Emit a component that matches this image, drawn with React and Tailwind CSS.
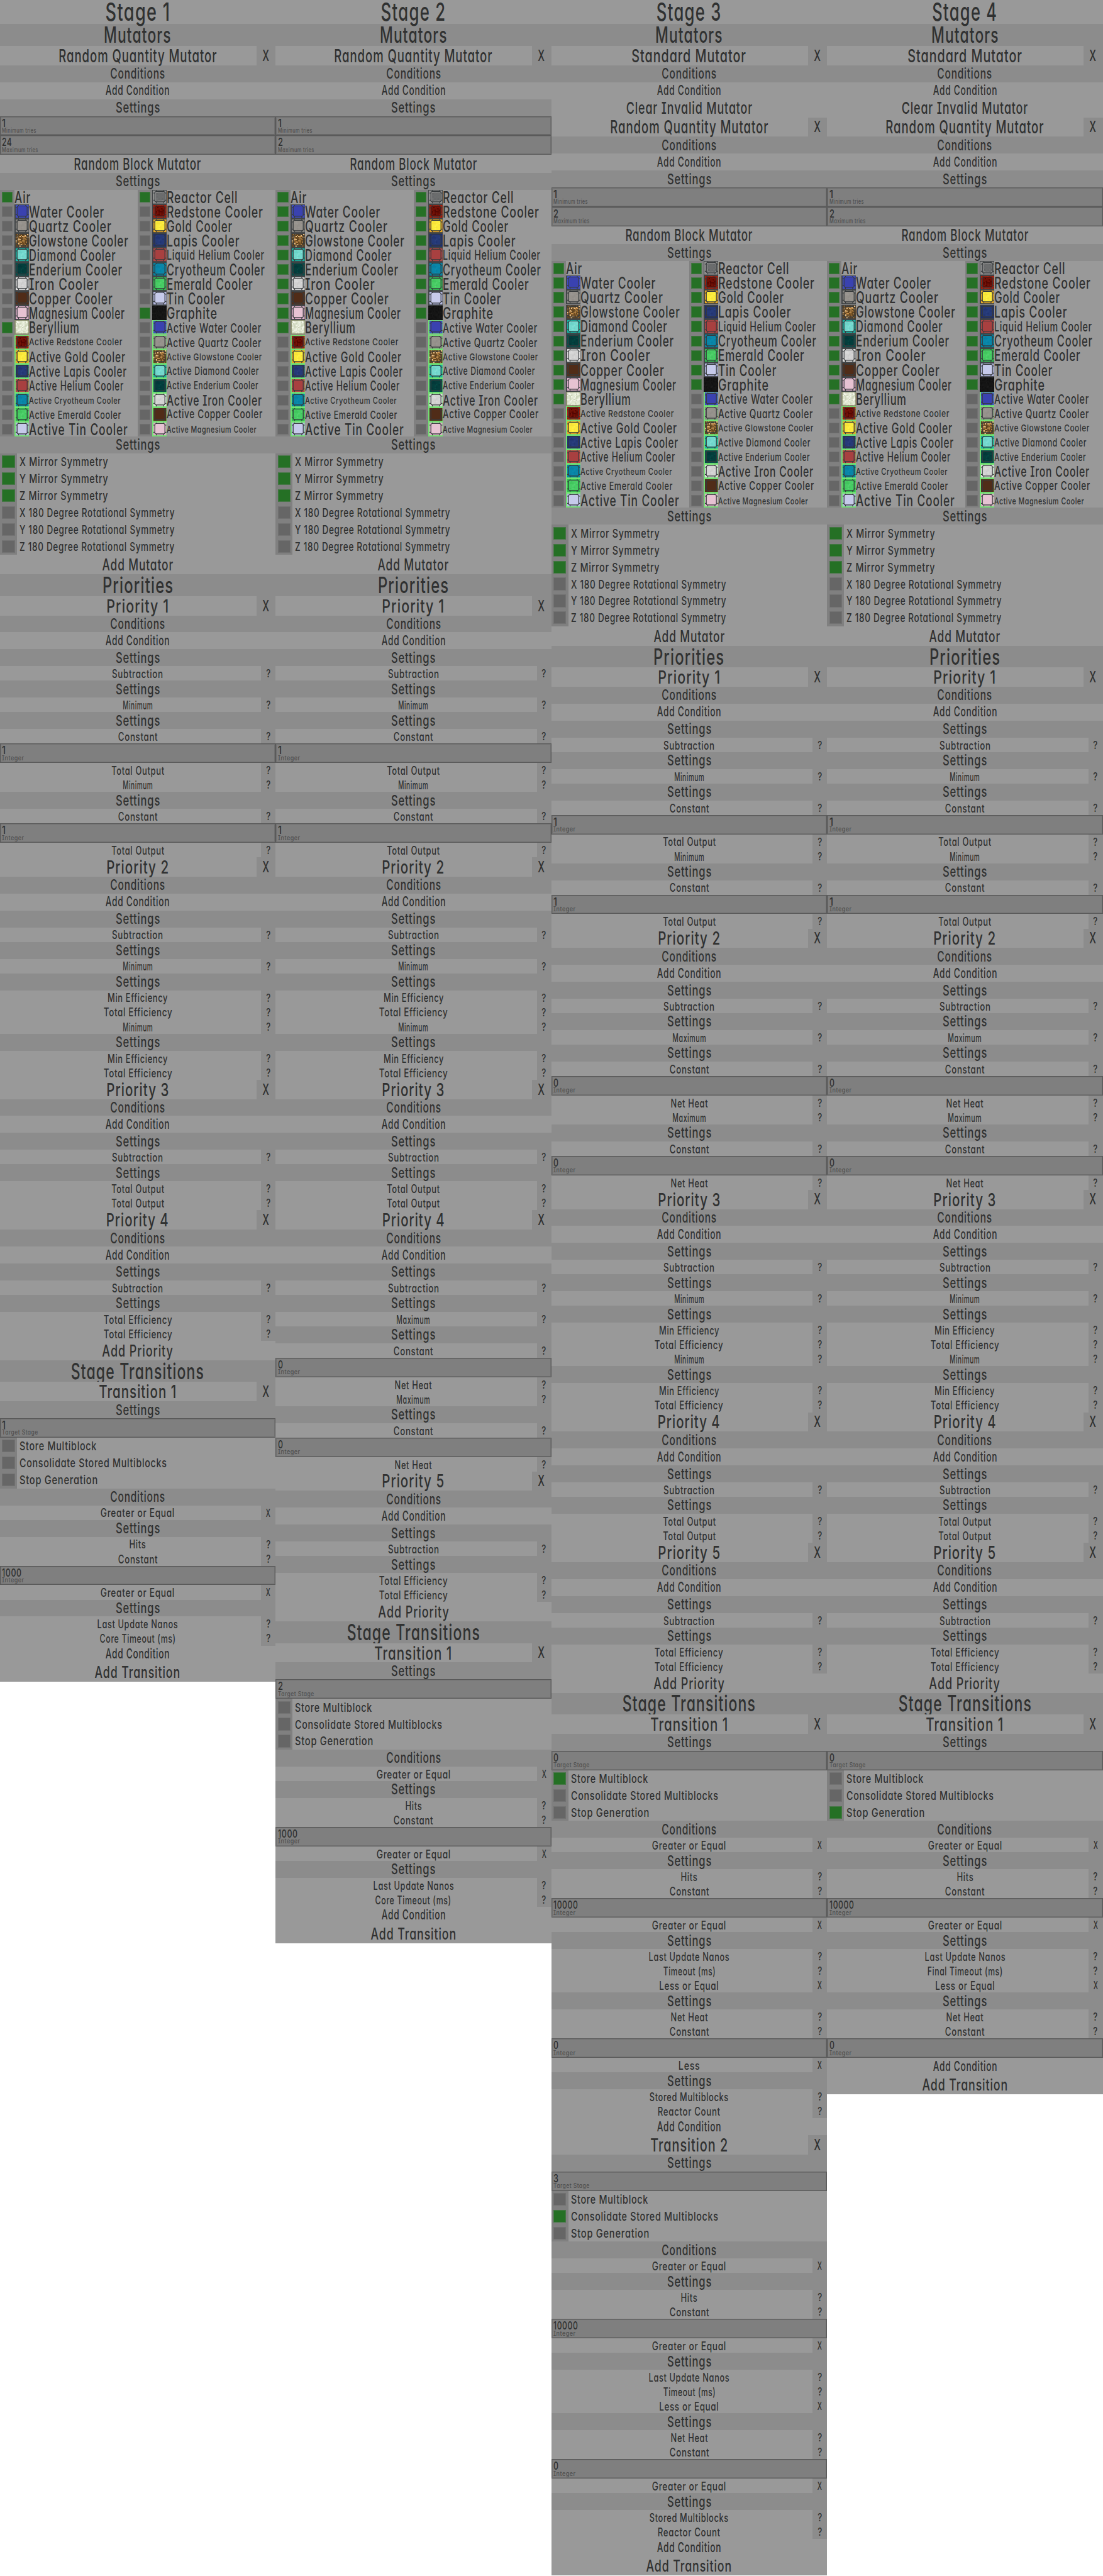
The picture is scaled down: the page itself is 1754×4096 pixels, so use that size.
import React, { useLayoutEffect, useRef, useState } from "react";

const PAGE_WIDTH = 1824;

/* Text squeezed or stretched horizontally to a given width. */
function Label({ children, width, className = "", origin = "origin-center" }) {
  const ref = useRef(null);
  const [scale, setScale] = useState(1);
  useLayoutEffect(() => {
    const zoom = document.getElementById("page").getBoundingClientRect().width / PAGE_WIDTH;
    const node = ref.current;
    const previous = node.style.transform;
    node.style.transform = "none";
    const natural = node.getBoundingClientRect().width / zoom;
    node.style.transform = previous;
    setScale((width + 2) / natural);
  }, [width, children]);
  return (
    <span
      ref={ref}
      className={`inline-block shrink-0 leading-[1.22] tracking-[0.05em] whitespace-nowrap ${origin} ${className}`}
      style={{ transform: `scaleX(${scale})` }}
    >
      {children}
    </span>
  );
}

const WIDTHS = {
  Mutators: 110, "Random Quantity Mutator": 260, "Standard Mutator": 188, "Clear Invalid Mutator": 207.5,
  "Random Block Mutator": 209, Conditions: 89, "Add Condition": 104.5, Settings: 72, "Add Mutator": 116,
  Priorities: 116, Subtraction: 83, Minimum: 48, Maximum: 54, Constant: 64, "Total Output": 86,
  "Min Efficiency": 98, "Total Efficiency": 112, "Add Priority": 116, "Stage Transitions": 219,
  "Greater or Equal": 121, "Less or Equal": 97, Less: 34, Hits: 26, "Net Heat": 60,
  "Last Update Nanos": 132, "Core Timeout (ms)": 124, "Final Timeout (ms)": 123, "Timeout (ms)": 85,
  "Stored Multiblocks": 129, "Reactor Count": 102, "Add Transition": 140,
  "Minimum tries": 55, "Maximum tries": 58, Integer: 35, "Target Stage": 58,
  "X Mirror Symmetry": 145, "Y Mirror Symmetry": 145, "Z Mirror Symmetry": 145,
  "X 180 Degree Rotational Symmetry": 255, "Y 180 Degree Rotational Symmetry": 255, "Z 180 Degree Rotational Symmetry": 255,
  "Store Multiblock": 126, "Consolidate Stored Multiblocks": 242, "Stop Generation": 128,
};

function widthOf(text) {
  if (WIDTHS[text]) return WIDTHS[text];
  if (text.startsWith("Stage")) return 106;
  if (text.startsWith("Priority")) return 102;
  return 127;
}

function Bar({ text, row, size }) {
  return (
    <div className={`flex w-full items-center justify-center ${row}`}>
      <Label width={widthOf(text)} className={size}>{text}</Label>
    </div>
  );
}

const Title = ({ text }) => <Bar text={text} row="h-[40px] bg-[#999999]" size="text-[41px]" />;
const Section = ({ text }) => <Bar text={text} row="h-[36px] bg-[#8c8c8c]" size="text-[36.5px]" />;
const Heading = ({ text }) => <Bar text={text} row="h-[28px] bg-[#8c8c8c]" size="text-[24px]" />;
const Settings = () => <Heading text="Settings" />;
const AddCondition = () => <Bar text="Add Condition" row="h-[28px] bg-[#999999]" size="text-[22px]" />;
const AddItem = ({ text }) => <Bar text={text} row="h-[32px] bg-[#999999]" size="text-[26.5px]" />;
const SubTitle = ({ text }) => <Bar text={text} row="h-[30px] bg-[#999999]" size="text-[27px]" />;

function Removable({ text }) {
  return (
    <div className="relative flex h-[32px] items-center justify-center bg-[#999999]">
      <Label width={widthOf(text)} className="text-[30px]">{text}</Label>
      <div className="absolute inset-y-0 right-0 flex w-[32px] items-center justify-center bg-[#8c8c8c]">
        <Label width={10} className="text-[25px]">X</Label>
      </div>
    </div>
  );
}

function Param({ text, mark = "?" }) {
  return (
    <div className="relative flex h-[24px] items-center justify-center bg-[#999999] pt-px">
      <Label width={widthOf(text)} className="text-[19px]">{text}</Label>
      <div className="absolute inset-y-0 right-0 flex w-[24px] items-center justify-center bg-[#8c8c8c]">
        <Label width={6} className="text-[18px]">{mark}</Label>
      </div>
    </div>
  );
}

function Input({ value, label }) {
  const w = value === "1" ? 5 : value.length * 8 - 1;
  return (
    <div className="flex h-[32px] flex-col items-start border border-[#5a5a5a] bg-[#7f7f7f] pl-[2.5px] inset-ring inset-ring-[#6f6f6f]">
      <Label width={w} origin="origin-left" className="-mt-px text-[18px]">{value}</Label>
      <Label width={widthOf(label)} origin="origin-left" className="-mt-[4px] text-[11px] text-[#505050]">{label}</Label>
    </div>
  );
}

function Toggle({ text, on }) {
  return (
    <div className="flex h-[28px] items-center bg-[#999999]">
      <div className="flex h-full w-[28px] items-center justify-center bg-[#808080]">
        <div className={`size-[21px] border ${on ? "border-[#477747] bg-[#257025]" : "border-[#727272] bg-[#666666]"}`} />
      </div>
      <Label width={widthOf(text)} origin="origin-left" className="ml-[4px] pt-[1.5px] text-[20px]">{text}</Label>
    </div>
  );
}

/* Small block textures on a 24-unit tile. */
const TEXTURES = {
  water: ["#3f4cc4", "#3a42b0"],
  redstone: ["#a81c08", "#640c04", ["#7c1408", "#520602", "#741408"]],
  quartz: ["#868480", "#96928c", ["#918d89", "#9a9692"]],
  gold: ["#e6a624", "#fbea3c", ["#fff248", "#f8e236"]],
  glowstone: ["#5f4420", "#8a6430", ["#c8904c", "#5c4220", "#a07034", "#ecc48c", "#6b4a22"]],
  lapis: ["#1d2f70", "#263a78", ["#2a4080", "#223470"]],
  diamond: ["#16b2a2", "#74d8ce", ["#80e0d6", "#6ad2c8"]],
  helium: ["#b24444", "#a84040"],
  enderium: ["#06504c", "#043e3c", ["#054845", "#03383a"]],
  cryotheum: ["#0284a4", "#0a86a8", ["#0a8cb0", "#087fa2"]],
  iron: ["#dcdcdc", "#d2d2d2", ["#cacaca", "#dadada"]],
  emerald: ["#34b852", "#48cc64", ["#54d470", "#40c45c"]],
  copper: ["#53301c", "#502c18"],
  tin: ["#b4b8e0", "#c6caea"],
  magnesium: ["#dcaec8", "#e6c2d2"],
};

function noise(x, y, seed) {
  const v = Math.sin(x * 12.9898 + y * 78.233 + seed * 37.719) * 43758.5453;
  return v - Math.floor(v);
}

function speckles(x0, y0, count, step, colors, seed, density) {
  const cells = [];
  for (let y = 0; y < count; y++)
    for (let x = 0; x < count; x++)
      if (noise(x, y, seed) < density)
        cells.push(
          <rect key={`${x}-${y}`} x={x0 + x * step} y={y0 + y * step} width={step} height={step}
            fill={colors[Math.floor(noise(y, x, seed + 3) * colors.length)]} />
        );
  return cells;
}

function Frame() {
  return (
    <g fill="none" stroke="#363a3c" strokeWidth="1.2">
      <rect x="4.4" y="2.6" width="16.6" height="17" rx="2.2" />
      <path d="M6.8 1v2M18.6 1v2M6.8 19.5v2.5M18.6 19.5v2.5M2 5.2h2.4M2 17h2.4M21 5.2h2.4M21 17h2.4" />
    </g>
  );
}

function BlockIcon({ kind, active }) {
  let body;
  if (kind === "graphite") {
    body = <><rect width="24" height="24" fill="#151515" />{speckles(0, 0, 12, 2, ["#1b1b1b", "#111111"], 5, 0.5)}</>;
  } else if (kind === "beryllium") {
    body = (
      <>
        <rect width="24" height="24" fill="#868a6a" />
        <rect x="2" y="1" width="21" height="21" fill="#dce2cc" />
        {speckles(2, 1, 10, 2.1, ["#e6ecd8", "#ccd4ba", "#f2f4e8"], 8, 0.6)}
      </>
    );
  } else if (kind === "cell") {
    const checks = [];
    for (let y = 0; y < 12; y++)
      for (let x = 0; x < 12; x++)
        if ((x + y) % 2) checks.push(<rect key={`${x}-${y}`} x={6.4 + x * 1.1} y={4.4 + y * 1.1} width="1.1" height="1.1" fill="#404446" />);
    body = (
      <>
        <rect width="24" height="24" fill="#404446" />
        <rect x="1" y="1" width="22" height="21.5" fill="#8e8e8e" />
        {checks}
        <Frame />
      </>
    );
  } else {
    const [edge, fill, spots] = TEXTURES[kind];
    const lively = kind === "glowstone" || kind === "redstone";
    body = (
      <>
        <rect width="24" height="24" fill={active ? "#73e373" : "#404446"} />
        <rect x="2" y="1" width="21.4" height="21" fill={edge} />
        {kind === "glowstone" && speckles(2, 1, 10, 2.1, spots, 2, 0.7)}
        {kind === "redstone" && speckles(2, 1, 14, 1.5, ["#b02010", "#981806"], 2, 0.4)}
        {kind !== "glowstone" && <rect x="4.6" y="2.8" width="16.2" height="16.6" rx="2" fill={fill} />}
        {spots && speckles(6, 4.2, 6, 2.25, spots, 4, lively ? 0.75 : 0.4)}
        <Frame />
      </>
    );
  }
  return (
    <svg viewBox="0 0 24 24" className="block size-[24px] shrink-0 overflow-hidden">
      {body}
    </svg>
  );
}

const BIG = "text-[26px]";
const BLOCKS = [
  ["Air", null, 25, BIG, false], ["Reactor Cell", "cell", 116, BIG, false],
  ["Water Cooler", "water", 123, BIG, false], ["Redstone Cooler", "redstone", 158, BIG, false],
  ["Quartz Cooler", "quartz", 135, BIG, false], ["Gold Cooler", "gold", 107, BIG, false],
  ["Glowstone Cooler", "glowstone", 163, BIG, false], ["Lapis Cooler", "lapis", 119, BIG, false],
  ["Diamond Cooler", "diamond", 142, BIG, false], ["Liquid Helium Cooler", "helium", 160, "text-[22px]", false],
  ["Enderium Cooler", "enderium", 153, BIG, false], ["Cryotheum Cooler", "cryotheum", 161, BIG, false],
  ["Iron Cooler", "iron", 114, BIG, false], ["Emerald Cooler", "emerald", 141, BIG, false],
  ["Copper Cooler", "copper", 137, BIG, false], ["Tin Cooler", "tin", 95, BIG, false],
  ["Magnesium Cooler", "magnesium", 157, BIG, false], ["Graphite", "graphite", 82, BIG, false],
  ["Beryllium", "beryllium", 82, BIG, false], ["Active Water Cooler", "water", 155, "text-[21.5px]", true],
  ["Active Redstone Cooler", "redstone", 153, "text-[15.5px]", true], ["Active Quartz Cooler", "quartz", 155, "text-[20.5px]", true],
  ["Active Gold Cooler", "gold", 158, "text-[24px]", true], ["Active Glowstone Cooler", "glowstone", 156, "text-[15.5px]", true],
  ["Active Lapis Cooler", "lapis", 160, "text-[23.5px]", true], ["Active Diamond Cooler", "diamond", 151, "text-[17.5px]", true],
  ["Active Helium Cooler", "helium", 155, "text-[22px]", true], ["Active Enderium Cooler", "enderium", 150, "text-[17.5px]", true],
  ["Active Cryotheum Cooler", "cryotheum", 150, "text-[15px]", true], ["Active Iron Cooler", "iron", 156, "text-[24px]", true],
  ["Active Emerald Cooler", "emerald", 151, "text-[17.5px]", true], ["Active Copper Cooler", "copper", 157, "text-[19.5px]", true],
  ["Active Tin Cooler", "tin", 162, "text-[26px]", true], ["Active Magnesium Cooler", "magnesium", 147, "text-[15px]", true],
];

function BlockGrid({ checked }) {
  return (
    <div className="grid grid-cols-2 bg-[#999999]">
      {BLOCKS.map(([name, kind, width, size, active]) => (
        <div key={name} className="flex h-[24px] items-center">
          <div className="flex size-[24px] shrink-0 items-center justify-center bg-[#808080]">
            <div className={`size-[18px] border ${checked(name, active) ? "border-[#477747] bg-[#257025]" : "border-[#727272] bg-[#666666]"}`} />
          </div>
          {kind && <BlockIcon kind={kind} active={active} />}
          <Label width={width} origin="origin-left" className={`pt-[1px] ${size}`}>{name}</Label>
        </div>
      ))}
    </div>
  );
}

const PRIORITY_BODIES = {
  output: [["Minimum"], ["#"], ["Constant"], ["=", "1"], ["Total Output"], ["Minimum"], ["#"], ["Constant"], ["=", "1"], ["Total Output"]],
  heat: [["Maximum"], ["#"], ["Constant"], ["=", "0"], ["Net Heat"], ["Maximum"], ["#"], ["Constant"], ["=", "0"], ["Net Heat"]],
  minEfficiency: [["Minimum"], ["#"], ["Min Efficiency"], ["Total Efficiency"], ["Minimum"], ["#"], ["Min Efficiency"], ["Total Efficiency"]],
  totalOutput: [["Total Output"], ["Total Output"]],
  totalEfficiency: [["Total Efficiency"], ["Total Efficiency"]],
};

/* "#" is a settings header, "=" an integer field, anything else a parameter row. */
function Rows({ items }) {
  return items.map(([text, extra], i) => {
    if (text === "#") return <Settings key={i} />;
    if (text === "=") return <Input key={i} value={extra} label="Integer" />;
    return <Param key={i} text={text} mark={extra || "?"} />;
  });
}

function Priority({ index, kind }) {
  return (
    <section>
      <Removable text={`Priority ${index}`} />
      <Heading text="Conditions" />
      <AddCondition />
      <Settings />
      <Param text="Subtraction" />
      <Settings />
      <Rows items={PRIORITY_BODIES[kind]} />
    </section>
  );
}

function Transition({ index, target, toggles, conditions }) {
  return (
    <section>
      <Removable text={`Transition ${index}`} />
      <Settings />
      <Input value={target} label="Target Stage" />
      <Toggle text="Store Multiblock" on={toggles[0]} />
      <Toggle text="Consolidate Stored Multiblocks" on={toggles[1]} />
      <Toggle text="Stop Generation" on={toggles[2]} />
      <Heading text="Conditions" />
      <Rows items={conditions} />
      <AddCondition />
    </section>
  );
}

const hits = (n) => [["Greater or Equal", "X"], ["#"], ["Hits"], ["Constant"], ["=", n]];
const timeout = (name) => [["Greater or Equal", "X"], ["#"], ["Last Update Nanos"], [name]];
const heatLimit = [["Less or Equal", "X"], ["#"], ["Net Heat"], ["Constant"], ["=", "0"]];
const stored = (op) => [[op, "X"], ["#"], ["Stored Multiblocks"], ["Reactor Count"]];

const earlyChecks = (name) => ["Air", "Reactor Cell", "Graphite", "Beryllium"].includes(name);
const passiveChecks = (name, active) => !active;

const STAGES = [
  {
    max: "24", checked: earlyChecks,
    priorities: ["output", "minEfficiency", "totalOutput", "totalEfficiency"],
    transitions: [{ target: "1", toggles: [false, false, false], conditions: [...hits("1000"), ...timeout("Core Timeout (ms)")] }],
  },
  {
    max: "2", checked: passiveChecks,
    priorities: ["output", "minEfficiency", "totalOutput", "heat", "totalEfficiency"],
    transitions: [{ target: "2", toggles: [false, false, false], conditions: [...hits("1000"), ...timeout("Core Timeout (ms)")] }],
  },
  {
    max: "2", checked: passiveChecks, standard: true,
    priorities: ["output", "heat", "minEfficiency", "totalOutput", "totalEfficiency"],
    transitions: [
      { target: "0", toggles: [true, false, false], conditions: [...hits("10000"), ...timeout("Timeout (ms)"), ...heatLimit, ...stored("Less")] },
      { target: "3", toggles: [false, true, false], conditions: [...hits("10000"), ...timeout("Timeout (ms)"), ...heatLimit, ...stored("Greater or Equal")] },
    ],
  },
  {
    max: "2", checked: passiveChecks, standard: true,
    priorities: ["output", "heat", "minEfficiency", "totalOutput", "totalEfficiency"],
    transitions: [{ target: "0", toggles: [false, false, true], conditions: [...hits("10000"), ...timeout("Final Timeout (ms)"), ...heatLimit] }],
  },
];

function Stage({ number, stage }) {
  return (
    <div className="flex flex-col">
      <Title text={`Stage ${number}`} />
      <Section text="Mutators" />
      {stage.standard && (
        <>
          <Removable text="Standard Mutator" />
          <Heading text="Conditions" />
          <AddCondition />
          <SubTitle text="Clear Invalid Mutator" />
        </>
      )}
      <Removable text="Random Quantity Mutator" />
      <Heading text="Conditions" />
      <AddCondition />
      <Settings />
      <Input value="1" label="Minimum tries" />
      <Input value={stage.max} label="Maximum tries" />
      <SubTitle text="Random Block Mutator" />
      <Settings />
      <BlockGrid checked={stage.checked} />
      <Settings />
      {["X", "Y", "Z"].map((axis) => <Toggle key={axis} text={`${axis} Mirror Symmetry`} on />)}
      {["X", "Y", "Z"].map((axis) => <Toggle key={axis} text={`${axis} 180 Degree Rotational Symmetry`} />)}
      <AddItem text="Add Mutator" />
      <Section text="Priorities" />
      {stage.priorities.map((kind, i) => <Priority key={i} index={i + 1} kind={kind} />)}
      <AddItem text="Add Priority" />
      <Section text="Stage Transitions" />
      {stage.transitions.map((t, i) => <Transition key={i} index={i + 1} {...t} />)}
      <AddItem text="Add Transition" />
    </div>
  );
}

export default function App() {
  return (
    <div className="w-[1754px] bg-white">
      <main
        id="page"
        className="grid w-[1824px] grid-cols-4 items-start font-['Inter','Roboto',sans-serif] font-medium text-[#303131] [font-feature-settings:'cv08','cv11'] [zoom:0.9615]"
      >
        {STAGES.map((stage, i) => <Stage key={i} number={i + 1} stage={stage} />)}
      </main>
    </div>
  );
}
